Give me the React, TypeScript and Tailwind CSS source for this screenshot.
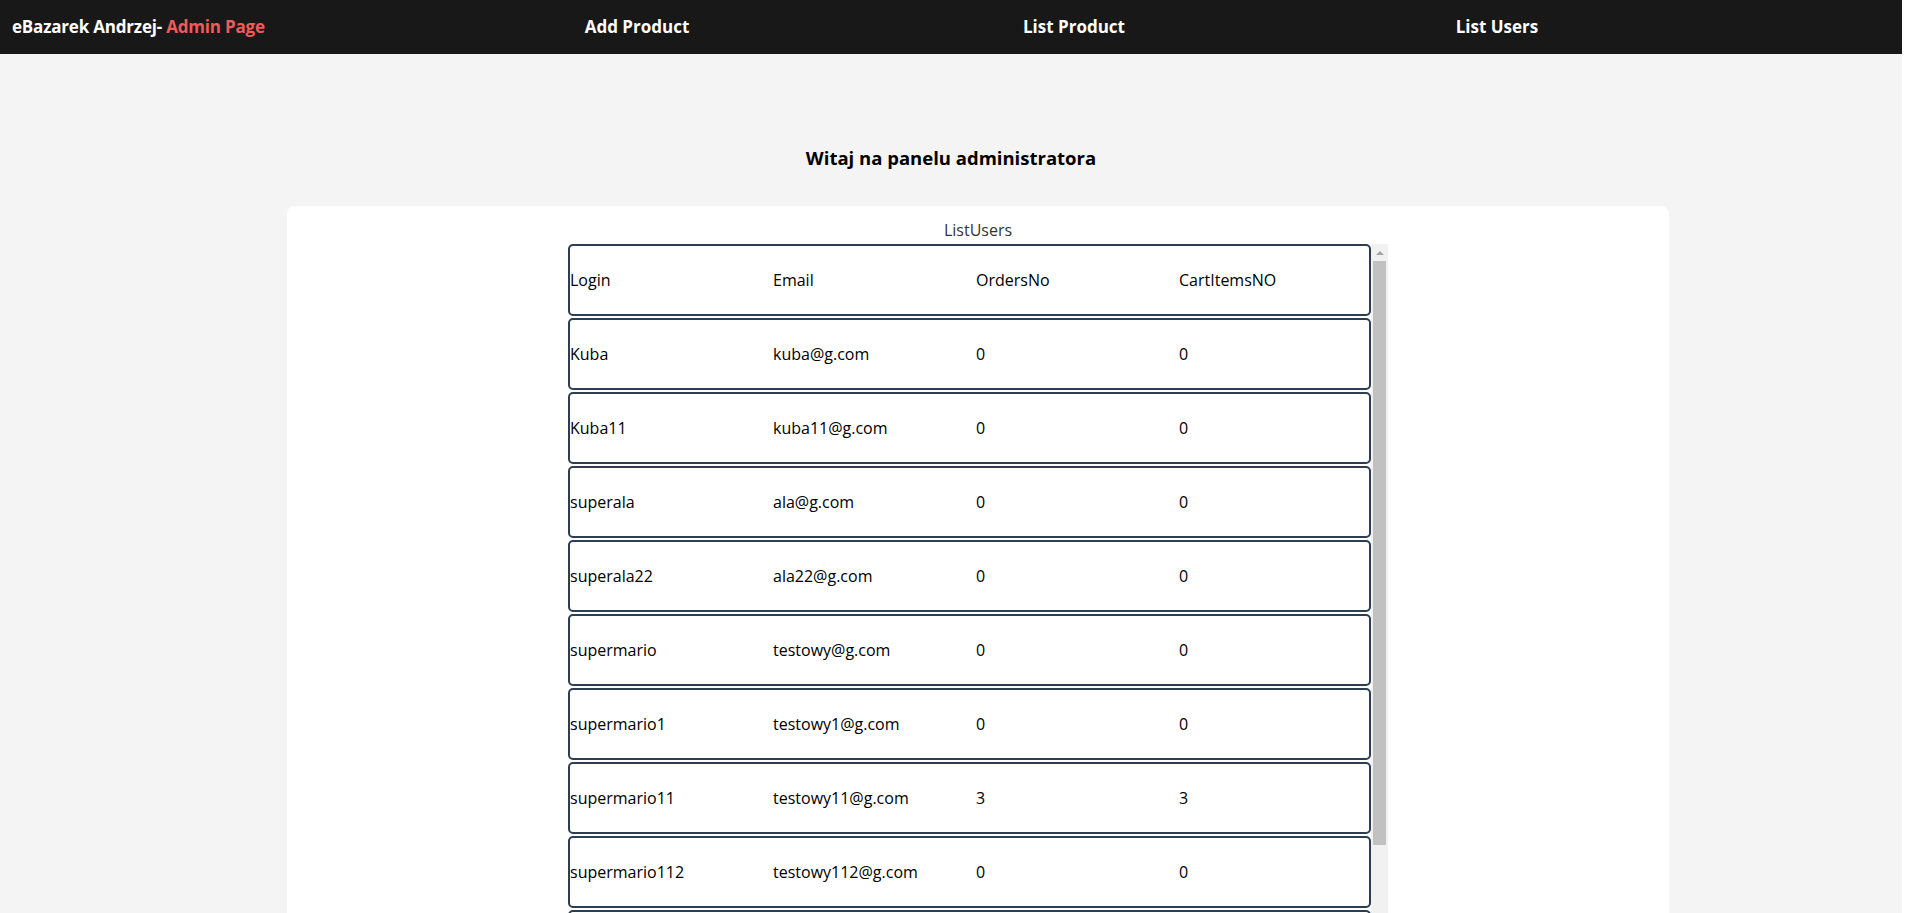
const users = [
  { login: "Kuba", email: "kuba@g.com", orders: 0, cart: 0 },
  { login: "Kuba11", email: "kuba11@g.com", orders: 0, cart: 0 },
  { login: "superala", email: "ala@g.com", orders: 0, cart: 0 },
  { login: "superala22", email: "ala22@g.com", orders: 0, cart: 0 },
  { login: "supermario", email: "testowy@g.com", orders: 0, cart: 0 },
  { login: "supermario1", email: "testowy1@g.com", orders: 0, cart: 0 },
  { login: "supermario11", email: "testowy11@g.com", orders: 3, cart: 3 },
  { login: "supermario112", email: "testowy112@g.com", orders: 0, cart: 0 },
  { login: "supermario2", email: "testowy2@g.com", orders: 0, cart: 0 },
];

const Row = ({ cells }: { cells: (string | number)[] }) => {
  return (
    <div className="grid grid-cols-[203px_203px_203px_1fr] items-center h-[72px] mb-[2px] border-2 border-[#2c3e50] rounded-[5px] bg-white text-[16px] text-black">
      {cells.map((c, i) => (
        <div key={i}>{c}</div>
      ))}
    </div>
  );
};

const App = () => {
  return (
    <div
      className="h-screen overflow-hidden flex bg-white"
      style={{ fontFamily: '"Open Sans", "Noto Sans", sans-serif' }}
    >
      <div className="w-[1902px] shrink-0 bg-[#f4f4f4]">
        {/* NAVBAR */}
        <div className="h-[54px] bg-[#181818] flex items-center text-white font-bold text-[17px]">
          <div className="w-[537px] pl-3 tracking-[-0.2px]">
            eBazarek Andrzej- <span className="text-[#f05a5a]">Admin Page</span>
          </div>
          <div className="w-[200px] text-center">Add Product</div>
          <div className="w-[237px]" />
          <div className="w-[200px] text-center">List Product</div>
          <div className="w-[223px]" />
          <div className="w-[200px] text-center">List Users</div>
        </div>

        {/* TITLE */}
        <h1 className="pt-[90px] text-center font-bold text-[18.5px] leading-[28px] text-black">
          Witaj na panelu administratora
        </h1>

        {/* CARD */}
        <div className="mt-[34px] ml-[287px] w-[1382px] bg-white rounded-lg pt-3 pb-10">
          <div className="text-center text-[16px] leading-[24px] text-[#333]">ListUsers</div>
          <div className="mt-[2px] w-[820px] mx-auto flex">
            <div className="w-[803px]">
              <Row cells={["Login", "Email", "OrdersNo", "CartItemsNO"]} />
              {users.map((u) => (
                <Row key={u.login} cells={[u.login, u.email, u.orders, u.cart]} />
              ))}
            </div>
            {/* SCROLLBAR */}
            <div className="w-[17px] bg-[#f1f1f1] flex flex-col items-center">
              <div className="h-[17px] flex items-center justify-center">
                <div className="w-0 h-0 border-l-[4px] border-r-[4px] border-b-[4px] border-l-transparent border-r-transparent border-b-[#a3a3a3]" />
              </div>
              <div className="w-[13px] h-[584px] bg-[#c1c1c1]" />
            </div>
          </div>
        </div>
      </div>
      <div className="flex-1 bg-white" />
    </div>
  );
};

export default App;
